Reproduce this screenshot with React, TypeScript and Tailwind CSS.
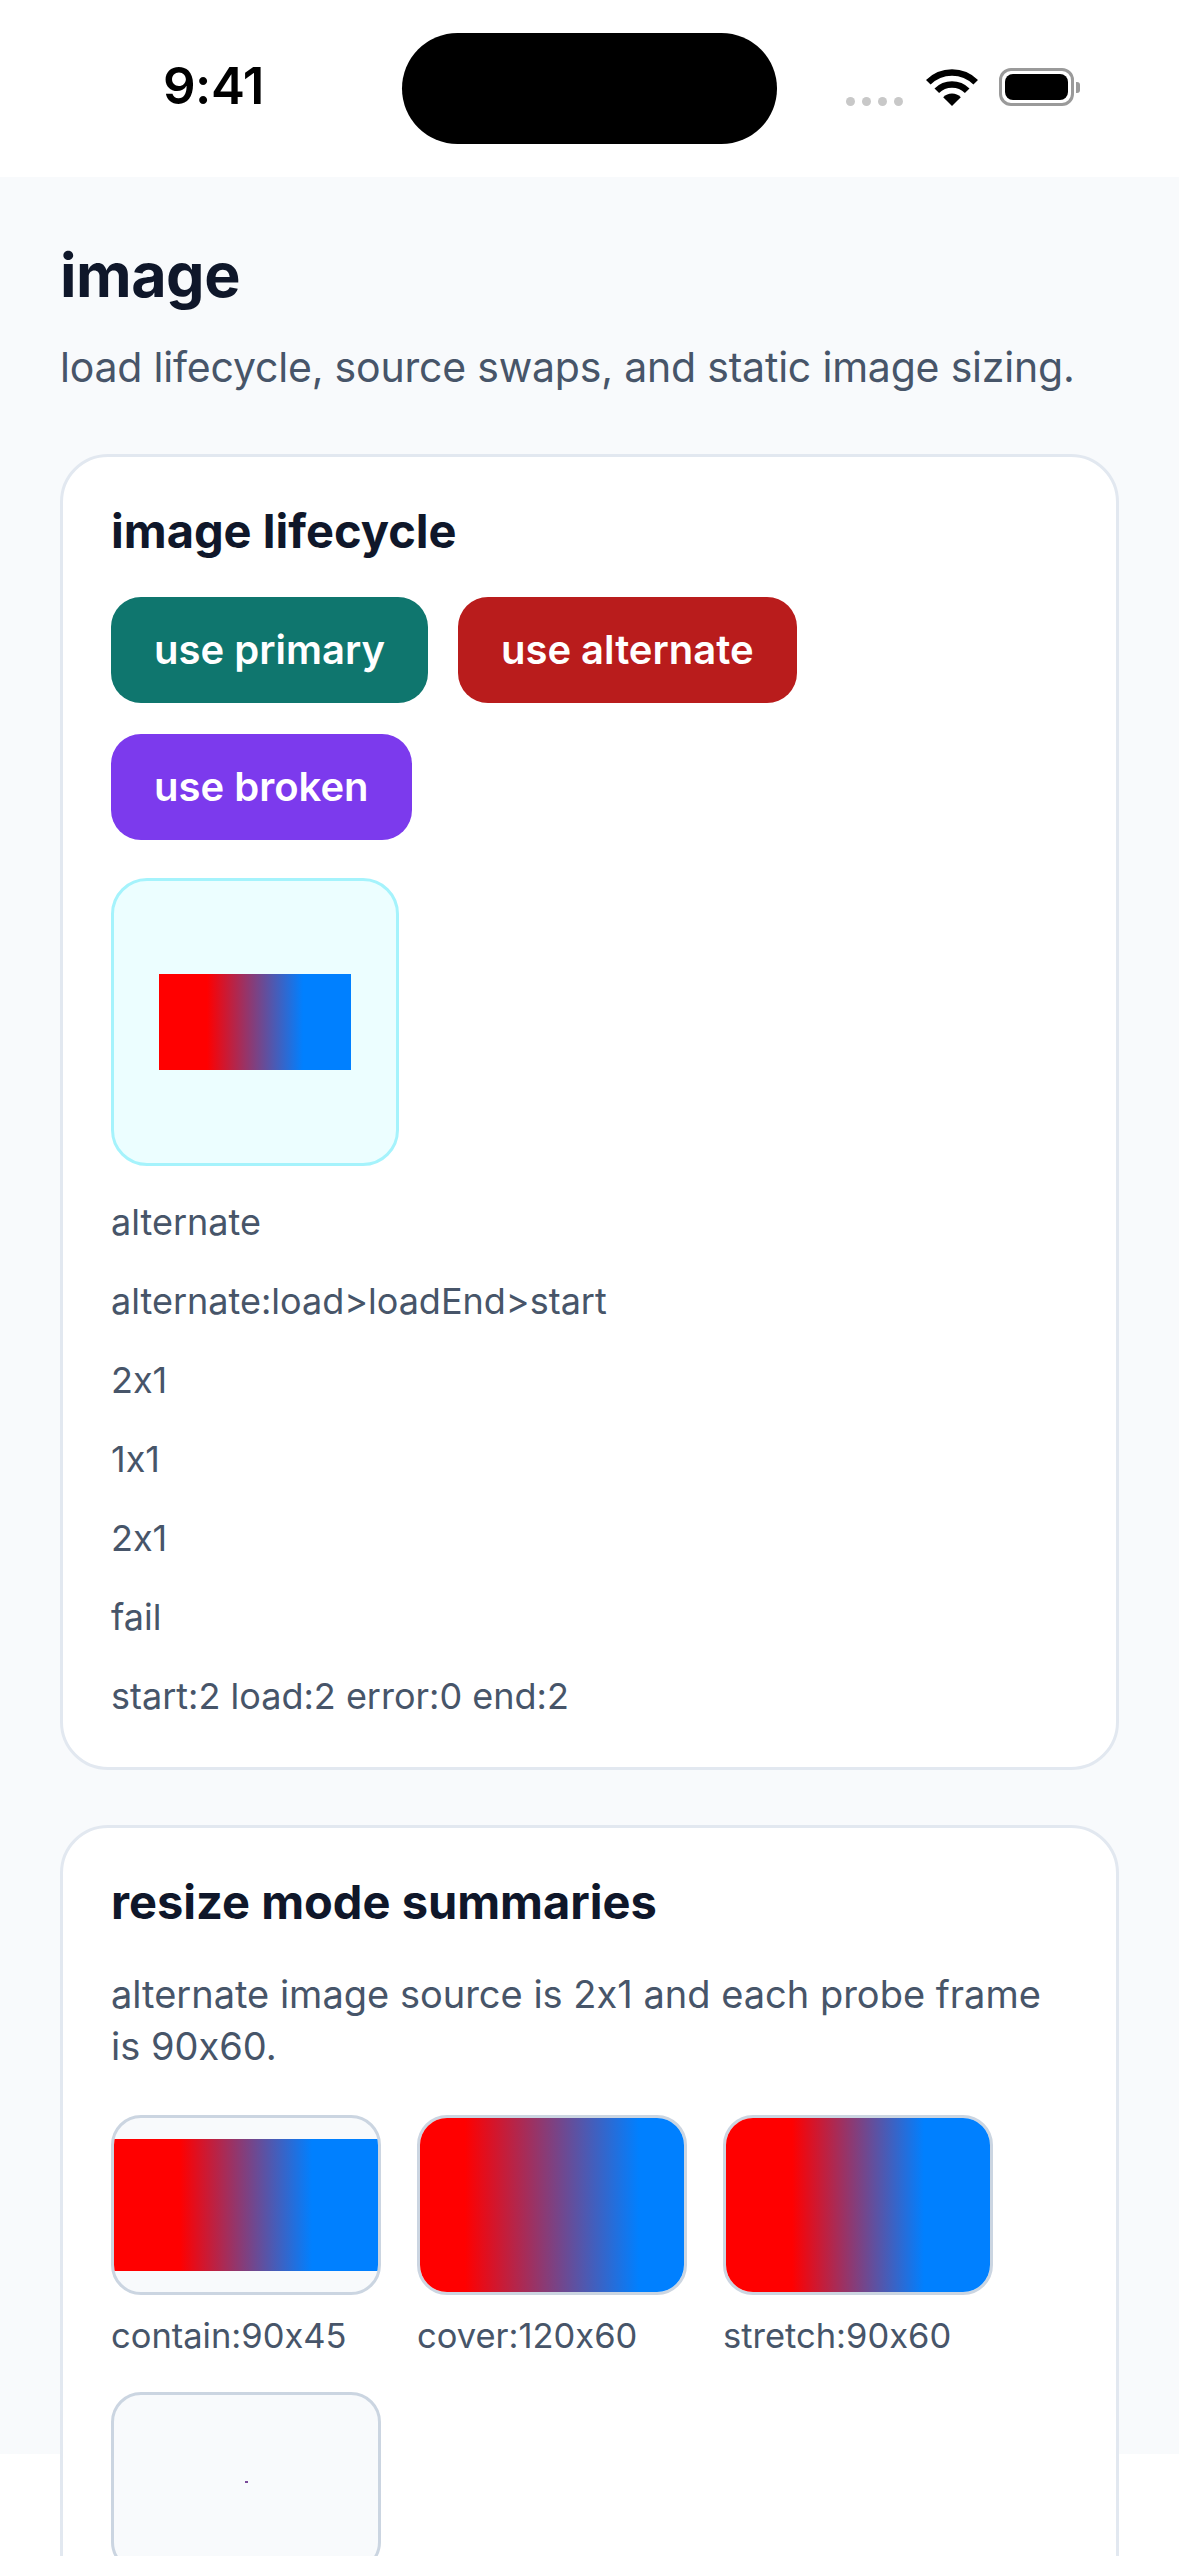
import React from 'react';

const gradient = 'bg-[linear-gradient(to_right,#ff0000_25%,#0080ff_75%)]';

function StatusBar() {
    return (
        <div className="relative h-[177px] shrink-0 bg-white">
            <div className="absolute left-[163px] top-[58px] text-[51px] font-semibold leading-[56px] tracking-[-0.5px] text-black">
                9:41
            </div>
            {/* Dynamic island */}
            <div className="absolute left-[402px] top-[33px] h-[111px] w-[375px] rounded-full bg-black" />
            <div className="absolute left-[846px] top-[97px] flex items-center gap-[7px]">
                <div className="h-[9px] w-[9px] rounded-full bg-[#c8c8c8]" />
                <div className="h-[9px] w-[9px] rounded-full bg-[#c8c8c8]" />
                <div className="h-[9px] w-[9px] rounded-full bg-[#c8c8c8]" />
                <div className="h-[9px] w-[9px] rounded-full bg-[#c8c8c8]" />
            </div>
            <svg className="absolute left-[926px] top-[68px]" width="52" height="39" viewBox="0 0 52 39">
                <path d="M2.3 14.3 A33.5 33.5 0 0 1 49.7 14.3" fill="none" stroke="#000" strokeWidth="6.5" />
                <path d="M10.8 22.8 A21.5 21.5 0 0 1 41.2 22.8" fill="none" stroke="#000" strokeWidth="6.5" />
                <path d="M26 38 L17.2 29.2 A12.5 12.5 0 0 1 34.8 29.2 Z" fill="#000" />
            </svg>
            <div className="absolute left-[999px] top-[68px] flex items-center">
                <div className="flex h-[38px] w-[75px] items-center justify-center rounded-[12px] border-[3px] border-[#9a9a9a]">
                    <div className="h-[26px] w-[63px] rounded-[8px] bg-black" />
                </div>
                <div className="ml-[2px] h-[11px] w-[4px] rounded-r-[3px] bg-[#9a9a9a]" />
            </div>
        </div>
    );
}

function Button({ label, color }: { label: string; color: string }) {
    return (
        <button className={`flex h-[106px] items-center rounded-[30px] px-[43px] text-[40px] font-semibold text-white ${color}`}>
            {label}
        </button>
    );
}

function Probe({ label, children }: { label: string; children: React.ReactNode }) {
    return (
        <div className="flex flex-col gap-[15px]">
            <div className="flex h-[180px] w-[270px] items-center justify-center overflow-hidden rounded-[30px] border-[3px] border-[#cbd5e1] bg-[#f8fafc]">
                {children}
            </div>
            <div className="text-[34.5px] leading-[52px] text-[#475569]">{label}</div>
        </div>
    );
}

export default function App() {
    const lines = [
        'alternate',
        'alternate:load>loadEnd>start',
        '2x1',
        '1x1',
        '2x1',
        'fail',
        'start:2 load:2 error:0 end:2',
    ];

    return (
        <div className="flex h-[2556px] w-[1179px] flex-col overflow-hidden bg-white font-['Inter','Noto_Sans',sans-serif] [font-feature-settings:'calt'_0]">
            <StatusBar />
            <div className="h-[2277px] shrink-0 bg-[#f8fafc] px-[60px] pt-[61px]">
                <h1 className="text-[61px] font-bold leading-[74px] tracking-[-0.5px] text-[#0f172a]">image</h1>
                <p className="mt-[25px] text-[41px] leading-[60px] tracking-[-0.2px] text-[#475569]">
                    load lifecycle, source swaps, and static image sizing.
                </p>

                {/* image lifecycle card */}
                <div className="mt-[57px] rounded-[48px] border-[3px] border-[#e2e8f0] bg-white px-[48px] pb-[42px] pt-[44px]">
                    <h2 className="text-[47px] font-bold leading-[60px] text-[#0f172a]">image lifecycle</h2>
                    <div className="mt-[36px] flex flex-wrap gap-x-[30px] gap-y-[31px]">
                        <Button label="use primary" color="bg-[#0f766e]" />
                        <Button label="use alternate" color="bg-[#b91c1c]" />
                        <Button label="use broken" color="bg-[#7c3aed]" />
                    </div>
                    <div className="mt-[38px] flex h-[288px] w-[288px] items-center justify-center rounded-[36px] border-[3px] border-[#a5f3fc] bg-[#ecfeff]">
                        <div className={`h-[96px] w-[192px] ${gradient}`} />
                    </div>
                    <div className="mt-[28px] flex flex-col gap-[22px]">
                        {lines.map((l, i) => (
                            <div key={i} className="text-[36px] leading-[57px] text-[#475569]">
                                {l}
                            </div>
                        ))}
                    </div>
                </div>

                {/* resize mode card */}
                <div className="mt-[55px] rounded-[48px] border-[3px] border-[#e2e8f0] bg-white px-[48px] pb-[42px] pt-[44px]">
                    <h2 className="text-[47px] font-bold leading-[60px] text-[#0f172a]">resize mode summaries</h2>
                    <p className="mt-[36px] text-[38px] leading-[52px] text-[#475569]">
                        alternate image source is 2x1 and each probe frame is 90x60.
                    </p>
                    <div className="mt-[43px] flex flex-wrap gap-x-[36px] gap-y-[30px]">
                        <Probe label="contain:90x45">
                            <div className={`h-[132px] w-full shrink-0 ${gradient}`} />
                        </Probe>
                        <Probe label="cover:120x60">
                            <div className={`h-full w-[348px] shrink-0 ${gradient}`} />
                        </Probe>
                        <Probe label="stretch:90x60">
                            <div className={`h-full w-full shrink-0 ${gradient}`} />
                        </Probe>
                        <Probe label="">
                            <div className="h-[2px] w-[3px] bg-[#7a4a9a]" />
                        </Probe>
                    </div>
                </div>
            </div>
        </div>
    );
}
